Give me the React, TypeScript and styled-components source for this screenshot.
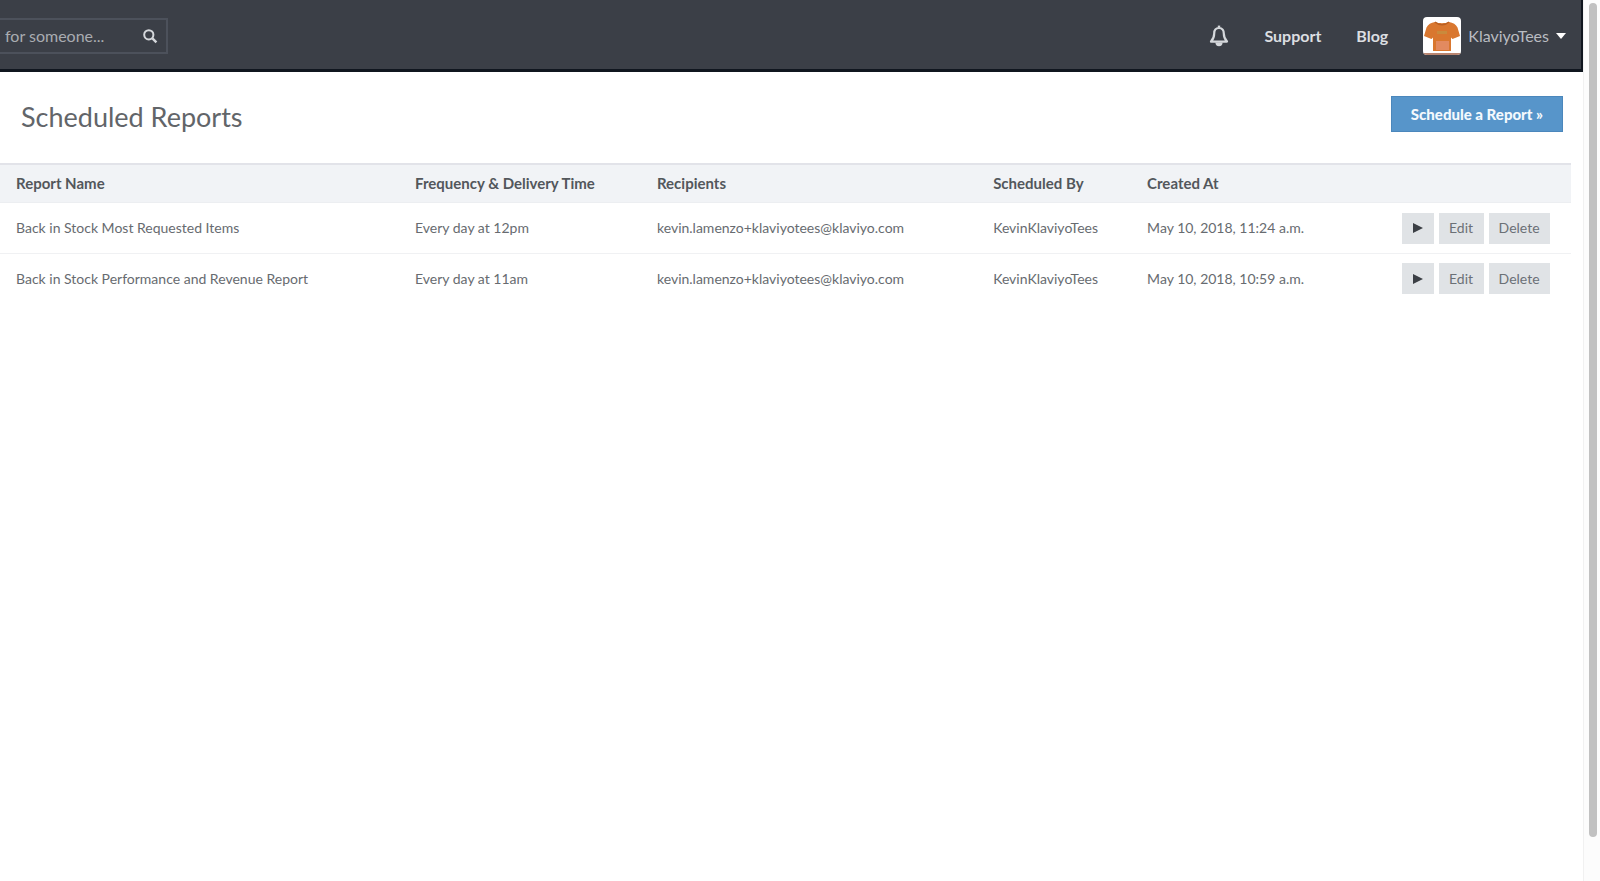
import React from "react";
import styled, { createGlobalStyle } from "styled-components";

const GlobalStyle = createGlobalStyle`
  * { box-sizing: border-box; }
  body {
    margin: 0;
    background: #ffffff;
    color: #676b70;
    font-family: Lato, "Open Sans", sans-serif;
    font-size: 14px;
    line-height: 20px;
  }
`;

const Shell = styled.div`
  display: flex;
  align-items: stretch;
  min-height: 100vh;
`;

const Page = styled.div`
  flex: 1;
  min-width: 0;
`;

const ScrollTrack = styled.div`
  flex: none;
  width: 17px;
  height: 100vh;
  padding: 3px 3px 0 5px;
  border-left: 1px solid #f1f1f1;
  background: #fcfcfc;
`;

const ScrollThumb = styled.div`
  height: 95%;
  border-radius: 4px;
  background: #c1c1c1;
`;

const Header = styled.header`
  display: flex;
  align-items: center;
  justify-content: space-between;
  height: 72px;
  padding: 3px 15px 0 0;
  background: #3b3f47;
  border-right: 2px solid #10161f;
  border-bottom: 3px solid #10161f;
`;

const SearchForm = styled.form`
  display: flex;
  align-items: center;
  width: 168px;
  height: 36px;
  padding: 0 8px 0 5px;
  border: 2px solid #4c515b;
  border-left: 0;
`;

const SearchInput = styled.input`
  flex: 1;
  min-width: 0;
  padding: 0;
  border: 0;
  outline: 0;
  background: transparent;
  color: #a9acb1;
  font: inherit;
  font-size: 16px;
  &::placeholder {
    color: #a9acb1;
    opacity: 1;
  }
`;

const IconButton = styled.button`
  display: flex;
  padding: 0;
  border: 0;
  background: transparent;
  color: #d5d8dc;
  cursor: pointer;
`;

const HeaderNav = styled.nav`
  display: flex;
  align-items: center;
`;

const NavLink = styled.a`
  margin-left: 35px;
  color: #dcdee1;
  font-size: 16px;
  font-weight: 700;
  text-decoration: none;
`;

const AccountButton = styled.button`
  display: flex;
  align-items: center;
  gap: 7px;
  margin-left: 35px;
  padding: 0;
  border: 0;
  background: transparent;
  color: #b9bcc1;
  font: inherit;
  font-size: 16px;
  cursor: pointer;
`;

const Avatar = styled.span`
  display: flex;
  width: 38px;
  height: 38px;
  border-radius: 4px;
  overflow: hidden;
  background: #ffffff;
`;

const TitleBar = styled.div`
  display: flex;
  align-items: center;
  justify-content: space-between;
  height: 91px;
  padding: 0 20px 0 21px;
`;

const Title = styled.h1`
  margin: 0 0 2px;
  color: #626569;
  font-size: 27px;
  line-height: 36px;
  font-weight: 400;
`;

const PrimaryButton = styled.button`
  height: 36px;
  margin-bottom: 8px;
  padding: 0 19px;
  border: 1px solid #4b87bc;
  background: #5795ca;
  color: #f4f9fd;
  font: inherit;
  font-size: 15px;
  font-weight: 900;
  cursor: pointer;
`;

const TableArea = styled.div`
  padding-right: 12px;
`;

const ReportTable = styled.table`
  width: 100%;
  table-layout: fixed;
  border-collapse: separate;
  border-spacing: 0;
`;

const Column = styled.col<{ $share: number }>`
  width: ${(p) => p.$share}%;
`;

const HeadCell = styled.th`
  height: 40px;
  padding: 0 0 2px 16px;
  border-top: 2px solid #e2e3e9;
  border-bottom: 1px solid #eceef1;
  background: #f1f3f6;
  color: #53575c;
  font-size: 15px;
  font-weight: 700;
  text-align: left;
  white-space: nowrap;
`;

const ReportRow = styled.tr`
  & + & > td {
    border-top: 1px solid #f0f1f3;
  }
`;

const Cell = styled.td`
  height: 50px;
  padding: 0 0 0 16px;
  white-space: nowrap;
`;

const Actions = styled.div`
  display: flex;
  gap: 5px;
`;

const SmallButton = styled.button<{ $width: number }>`
  display: flex;
  align-items: center;
  justify-content: center;
  width: ${(p) => p.$width}px;
  height: 31px;
  padding: 0;
  border: 0;
  background: #e0e3e6;
  color: #6b7076;
  font: inherit;
  cursor: pointer;
`;

const columns = [
  { label: "Report Name", share: 25.4 },
  { label: "Frequency & Delivery Time", share: 15.4 },
  { label: "Recipients", share: 21.4 },
  { label: "Scheduled By", share: 9.8 },
  { label: "Created At", share: 16.2 },
  { label: "", share: 11.8 },
];

const reports = [
  {
    name: "Back in Stock Most Requested Items",
    frequency: "Every day at 12pm",
    created: "May 10, 2018, 11:24 a.m.",
  },
  {
    name: "Back in Stock Performance and Revenue Report",
    frequency: "Every day at 11am",
    created: "May 10, 2018, 10:59 a.m.",
  },
];

const SearchIcon = () => (
  <svg width="16" height="16" viewBox="0 0 16 16" fill="none" stroke="currentColor">
    <circle cx="6.8" cy="6.8" r="4.6" strokeWidth="2" />
    <path d="M10.4 10.4 14.4 14.4" strokeWidth="2.4" />
  </svg>
);

const BellIcon = () => (
  <svg width="20" height="22" viewBox="0 0 20 22" fill="none">
    <path
      d="M10 3c-3.400 0-4.800 2.400-4.800 5.400 0 4.200-1.400 6.200-3.200 8.200h16c-1.800-2-3.200-4-3.200-8.200C14.800 5.400 13.400 3 10 3Z"
      stroke="currentColor"
      strokeWidth="2.200"
      strokeLinejoin="round"
    />
    <path d="M10 .6v2" stroke="currentColor" strokeWidth="2.400" />
    <path d="M6.400 17.600a3.600 3.600 0 0 0 7.200 0Z" fill="currentColor" />
  </svg>
);

const ShirtIcon = () => (
  <svg width="38" height="38" viewBox="0 0 38 38">
    <path
      d="M12 5c4 1.600 10 1.600 14 0 4 .6 7 2.500 8.500 5.500L37 19l-7.500 3-1.500-1.500V34H10V20.500L8.500 22 1 19l2.500-8.500C5 7.500 8 5.600 12 5Z"
      fill="#d9772f"
    />
    <path d="M12 5c4 3.600 10 3.600 14 0" fill="none" stroke="#b95f22" strokeWidth="1.500" />
    <path d="M14 14h10v3H14z" fill="#c98a3c" />
    <path d="M13 24h13v9H13z" fill="#e28a60" />
    <path d="M0 36h38v2H0z" fill="#b98570" />
  </svg>
);

const CaretIcon = () => (
  <svg width="10" height="6" viewBox="0 0 10 6">
    <path d="M0 0h10L5 6Z" fill="#ffffff" />
  </svg>
);

const PlayIcon = () => (
  <svg width="10" height="10" viewBox="0 0 10 10">
    <path d="M0 0 10 5 0 10Z" fill="#3b3f45" />
  </svg>
);

export default function App() {
  return (
    <>
      <GlobalStyle />
      <Shell>
        <Page>
          <Header>
            <SearchForm role="search" onSubmit={(e) => e.preventDefault()}>
              <SearchInput type="text" aria-label="Search" placeholder="for someone..." />
              <IconButton type="submit" aria-label="Submit search">
                <SearchIcon />
              </IconButton>
            </SearchForm>
            <HeaderNav>
              <IconButton type="button" aria-label="Notifications">
                <BellIcon />
              </IconButton>
              <NavLink href="#support">Support</NavLink>
              <NavLink href="#blog">Blog</NavLink>
              <AccountButton type="button">
                <Avatar>
                  <ShirtIcon />
                </Avatar>
                KlaviyoTees
                <CaretIcon />
              </AccountButton>
            </HeaderNav>
          </Header>
          <main>
            <TitleBar>
              <Title>Scheduled Reports</Title>
              <PrimaryButton type="button">Schedule a Report »</PrimaryButton>
            </TitleBar>
            <TableArea>
              <ReportTable>
                <colgroup>
                  {columns.map((c) => (
                    <Column key={c.label} $share={c.share} />
                  ))}
                </colgroup>
                <thead>
                  <tr>
                    {columns.map((c) => (
                      <HeadCell key={c.label} scope="col">
                        {c.label}
                      </HeadCell>
                    ))}
                  </tr>
                </thead>
                <tbody>
                  {reports.map((r) => (
                    <ReportRow key={r.name}>
                      <Cell>{r.name}</Cell>
                      <Cell>{r.frequency}</Cell>
                      <Cell>kevin.lamenzo+klaviyotees@klaviyo.com</Cell>
                      <Cell>KevinKlaviyoTees</Cell>
                      <Cell>{r.created}</Cell>
                      <Cell>
                        <Actions>
                          <SmallButton type="button" $width={32} aria-label="Run report">
                            <PlayIcon />
                          </SmallButton>
                          <SmallButton type="button" $width={45}>
                            Edit
                          </SmallButton>
                          <SmallButton type="button" $width={61}>
                            Delete
                          </SmallButton>
                        </Actions>
                      </Cell>
                    </ReportRow>
                  ))}
                </tbody>
              </ReportTable>
            </TableArea>
          </main>
        </Page>
        <ScrollTrack>
          <ScrollThumb />
        </ScrollTrack>
      </Shell>
    </>
  );
}
